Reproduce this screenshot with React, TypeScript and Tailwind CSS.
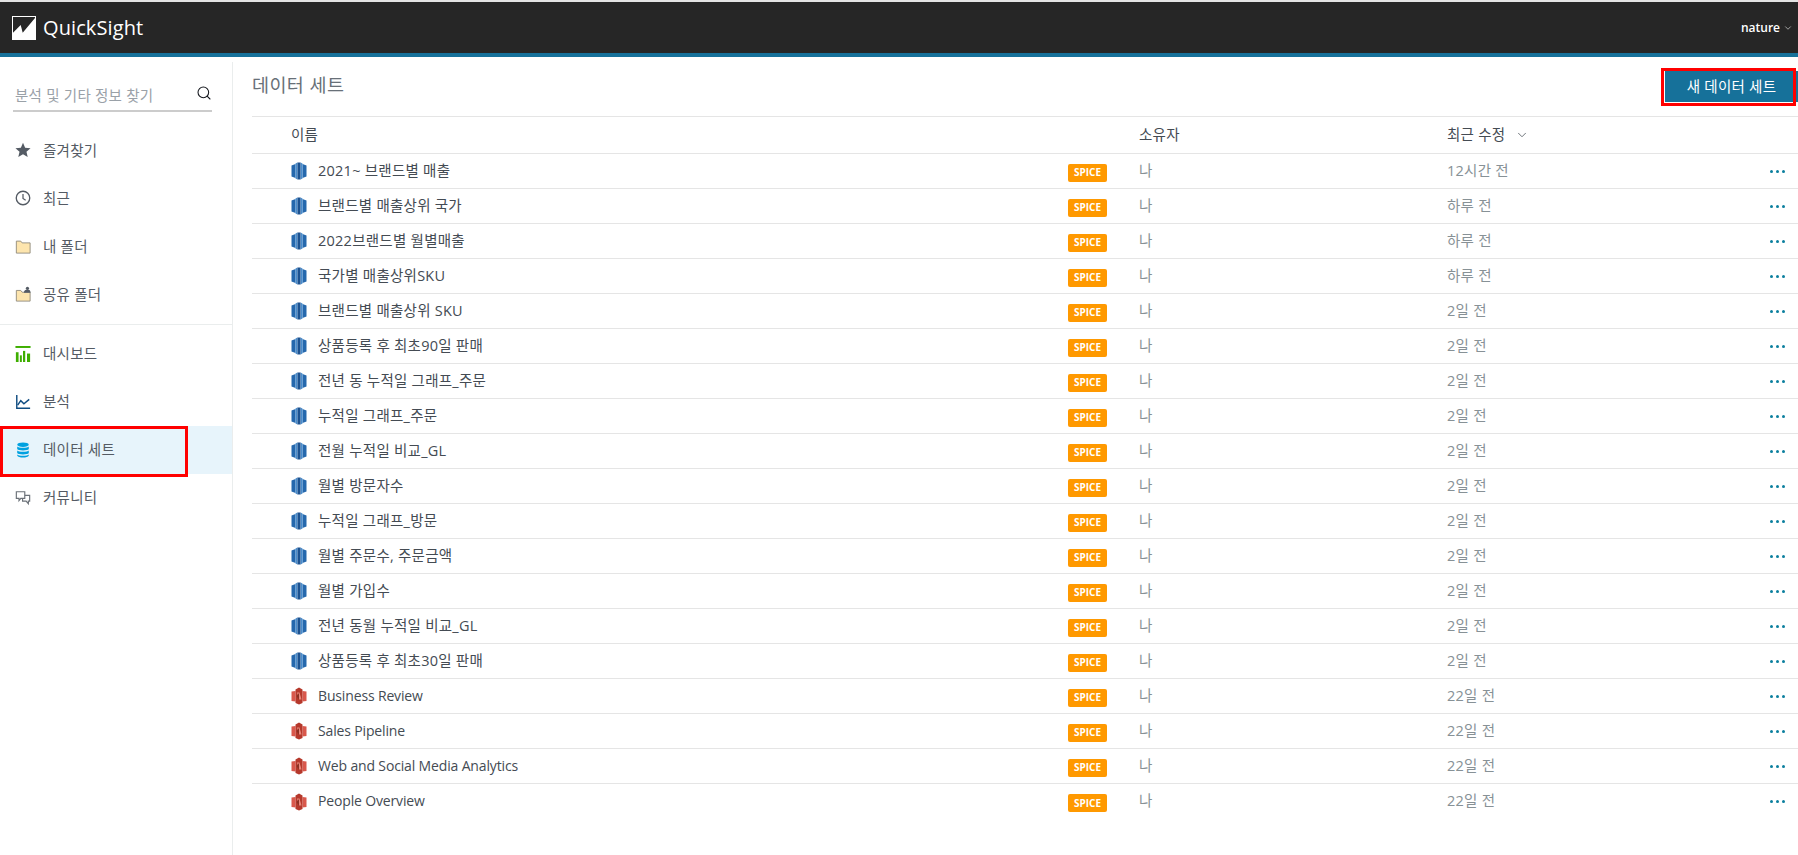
import { Search, ChevronDown } from "lucide-react";
import type { ReactNode } from "react";

const rows = [
  { name: "2021~ 브랜드별 매출", when: "12시간 전", kind: "blue" },
  { name: "브랜드별 매출상위 국가", when: "하루 전", kind: "blue" },
  { name: "2022브랜드별 월별매출", when: "하루 전", kind: "blue" },
  { name: "국가별 매출상위SKU", when: "하루 전", kind: "blue" },
  { name: "브랜드별 매출상위 SKU", when: "2일 전", kind: "blue" },
  { name: "상품등록 후 최초90일 판매", when: "2일 전", kind: "blue" },
  { name: "전년 동 누적일 그래프_주문", when: "2일 전", kind: "blue" },
  { name: "누적일 그래프_주문", when: "2일 전", kind: "blue" },
  { name: "전월 누적일 비교_GL", when: "2일 전", kind: "blue" },
  { name: "월별 방문자수", when: "2일 전", kind: "blue" },
  { name: "누적일 그래프_방문", when: "2일 전", kind: "blue" },
  { name: "월별 주문수, 주문금액", when: "2일 전", kind: "blue" },
  { name: "월별 가입수", when: "2일 전", kind: "blue" },
  { name: "전년 동월 누적일 비교_GL", when: "2일 전", kind: "blue" },
  { name: "상품등록 후 최초30일 판매", when: "2일 전", kind: "blue" },
  { name: "Business Review", when: "22일 전", kind: "red" },
  { name: "Sales Pipeline", when: "22일 전", kind: "red" },
  { name: "Web and Social Media Analytics", when: "22일 전", kind: "red" },
  { name: "People Overview", when: "22일 전", kind: "red" },
];

function Logo() {
  return (
    <svg width="24" height="24" viewBox="0 0 24 24">
      <rect width="24" height="24" fill="#fff" />
      <path d="M1 1h22v1L10.700 16.700 8.700 9 1 16.700z" fill="#262626" />
    </svg>
  );
}

function StarIcon() {
  return (
    <svg width="18" height="18" viewBox="0 0 18 18">
      <path d="M9 .8l2.400 5.700 6.100.5-4.600 4 1.400 6L9 13.800 3.700 17l1.400-6-4.600-4 6.100-.5z" fill="#545b64" />
    </svg>
  );
}

function ClockIcon() {
  return (
    <svg width="18" height="18" viewBox="0 0 18 18" fill="none" stroke="#545b64">
      <circle cx="9" cy="9" r="7.600" strokeWidth="1.500" />
      <path d="M9 4.500V9.500l3 2" strokeWidth="1.400" />
    </svg>
  );
}

function FolderIcon() {
  return (
    <svg width="18" height="18" viewBox="0 0 18 18">
      <path d="M1.500 3.500h5l1.500 2h9V17h-15.500z" fill="#fde5ae" stroke="#8f8a7a" />
    </svg>
  );
}

function SharedFolderIcon() {
  return (
    <svg width="18" height="18" viewBox="0 0 18 18">
      <path d="M1.500 5h5l1.500 2h9v10h-15.500z" fill="#fde5ae" stroke="#8f8a7a" />
      <circle cx="14" cy="2.600" r="1.800" fill="#545b64" />
      <path d="M10 7.500c0-2.500 1.800-3.500 4-3.500s3.500 1 3.500 3.500z" fill="#545b64" />
    </svg>
  );
}

function DashboardIcon() {
  return (
    <svg width="18" height="18" viewBox="0 0 18 18" fill="#3eae00">
      <rect x="0.500" y="0" width="17" height="2.200" />
      <rect x="1" y="7" width="3" height="11" />
      <rect x="5.500" y="10.500" width="2.200" height="7.500" />
      <rect x="9" y="5.500" width="2.500" height="12.500" />
      <rect x="13.500" y="8.500" width="3.500" height="9.500" />
    </svg>
  );
}

function AnalysisIcon() {
  return (
    <svg width="18" height="18" viewBox="0 0 18 18" fill="none" stroke="#0f4c81" strokeWidth="1.600">
      <path d="M2 1v15h15" />
      <path d="M3 12.500l3.500-5 3.500 3.500 6-5" />
    </svg>
  );
}

function DatabaseIcon() {
  return (
    <svg width="18" height="18" viewBox="0 0 18 18" fill="#00a1e0">
      <ellipse cx="9" cy="3" rx="6.500" ry="2.500" />
      <path d="M2.500 5c1 2 12 2 13 0v3c-1 2.200-12 2.200-13 0z" />
      <path d="M2.500 9.500c1 2 12 2 13 0v3c-1 2.200-12 2.200-13 0z" />
      <path d="M2.500 14c1 2 12 2 13 0v1.200c-1 3-12 3-13 0z" />
    </svg>
  );
}

function CommunityIcon() {
  return (
    <svg width="18" height="18" viewBox="0 0 18 18" fill="none" stroke="#6b7178" strokeWidth="1.300">
      <path d="M1.500 2h9.500v7.500H6.500l-2 2.500V9.500h-3z" />
      <path d="M11 6h5.500v6.500H15v3L12.500 12.500H8.500v-3" />
    </svg>
  );
}

function BlueSetIcon() {
  return (
    <svg width="16" height="18" viewBox="0 0 16 18">
      <path d="M.5 3.500L4.500 2v14L.5 14.500z" fill="#2568ad" />
      <path d="M15.500 3.500L11.500 2v14l4-1.500z" fill="#2568ad" />
      <path d="M4.500 1.500L6.500 .5v17l-2-1z" fill="#4a8ccb" />
      <path d="M11.500 1.500L9.500 .5v17l2-1z" fill="#4a8ccb" />
      <rect x="6.500" y="0.500" width="3" height="17" fill="#1c5290" />
    </svg>
  );
}

function RedSetIcon() {
  return (
    <svg width="16" height="18" viewBox="0 0 16 18">
      <path d="M.5 4.500l4-.5v10.500l-4-.5z" fill="#d9584c" />
      <path d="M15.500 4.500l-4-.5v10.500l4-.5z" fill="#d9584c" />
      <path d="M4.500 2.500L8 .5l3.500 2v13.500L8 17.500l-3.500-1.500z" fill="#b5382b" />
      <path d="M6 5.500h2.500l2 7H8z" fill="#e8867a" />
      <path d="M5.500 9l2.500-3v7z" fill="#8c3123" />
    </svg>
  );
}

function NavItem({ icon, label, active, lift }: { icon: ReactNode; label: string; active?: boolean; lift?: boolean }) {
  return (
    <div className={`relative flex h-12 items-center gap-3 pl-[15px] text-[14.5px] tracking-[0.25px] text-[#545b64] ${active ? "bg-[#e7f4fb]" : ""}`}>
      <span className="flex w-4 shrink-0 justify-center">{icon}</span>
      <span className={lift ? "pb-[1px]" : "pt-[2px]"}>{label}</span>
      {active && <div className="absolute left-0 top-0 h-[51px] w-[188px] border-[3px] border-[#ff0000]" />}
    </div>
  );
}

function Dots() {
  return (
    <div className="flex gap-[3px]">
      <span className="h-[3px] w-[3px] rounded-full bg-[#0b7f9e]" />
      <span className="h-[3px] w-[3px] rounded-full bg-[#0b7f9e]" />
      <span className="h-[3px] w-[3px] rounded-full bg-[#0b7f9e]" />
    </div>
  );
}

export default function App() {
  return (
    <div className="flex h-[855px] w-[1798px] flex-col overflow-hidden border-t-2 border-[#e3e3e3] bg-white font-['Open_Sans','Noto_Sans_CJK_KR',sans-serif]">
      <header className="flex h-[55px] shrink-0 items-center justify-between border-b-4 border-[#16719a] bg-[#262626] pl-3 pr-[5px] text-white">
        <div className="flex items-center gap-[7px]">
          <Logo />
          <span className="text-[20px] tracking-[0.1px]">QuickSight</span>
        </div>
        <div className="flex items-center gap-[3px] text-[12px] font-semibold">
          nature
          <ChevronDown size={10} className="text-[#b8b8b8]" />
        </div>
      </header>

      <div className="flex min-h-0 flex-1">
        <aside className="w-[233px] shrink-0 pt-[5px]">
          <div className="h-full border-r border-[#eaeded]">
            <div className="pl-[13px] pr-[20px] pt-[21px]">
              <div className="flex h-[29px] items-start justify-between border-b-2 border-[#cccccc]">
                <span className="pl-[2px] text-[14.5px] leading-[26px] tracking-[0.25px] text-[#9aa1a8]">분석 및 기타 정보 찾기</span>
                <Search size={16} strokeWidth={1.6} className="mt-[2px] text-[#16191f]" />
              </div>
            </div>
            <nav className="mt-[14px]">
              <NavItem icon={<StarIcon />} label="즐겨찾기" />
              <NavItem icon={<ClockIcon />} label="최근" />
              <NavItem icon={<FolderIcon />} label="내 폴더" />
              <NavItem icon={<SharedFolderIcon />} label="공유 폴더" />
              <div className="mb-[5px] mt-[6px] border-t border-[#eaeded]" />
              <NavItem icon={<DashboardIcon />} label="대시보드" lift />
              <NavItem icon={<AnalysisIcon />} label="분석" lift />
              <NavItem icon={<DatabaseIcon />} label="데이터 세트" active lift />
              <NavItem icon={<CommunityIcon />} label="커뮤니티" lift />
            </nav>
          </div>
        </aside>

        <main className="min-w-0 flex-1 pl-[19px]">
          <div className="flex h-[59px] items-center justify-between">
            <h1 className="pb-1 text-[18.5px] font-normal tracking-[0.4px] text-[#687078]">데이터 세트</h1>
            <div className="relative">
              <button className="flex h-[31px] w-[133px] items-center justify-center bg-[#16719a] text-[14.5px] tracking-[0.25px] text-white">
                새 데이터 세트
              </button>
              <div className="absolute -left-[4px] -top-[3px] h-[38px] w-[135px] border-[3px] border-[#ff0000]" />
            </div>
          </div>

          <div className="flex h-[38px] items-center border-y border-[#e5e5e5] pl-[39px] text-[14.5px] tracking-[0.25px] text-[#444b53]">
            <div className="w-[848px] shrink-0">이름</div>
            <div className="w-[308px] shrink-0">소유자</div>
            <div className="flex items-center gap-[10px]">
              최근 수정
              <ChevronDown size={14} strokeWidth={1.3} />
            </div>
          </div>

          {rows.map((row) => (
            <div key={row.name} className="flex h-[35px] items-center border-b border-[#e5e5e5] pl-[39px] text-[14px] last:border-b-0">
              <div className="w-[27px] shrink-0">{row.kind === "blue" ? <BlueSetIcon /> : <RedSetIcon />}</div>
              <div className={`w-[750px] shrink-0 text-[#444b53] ${row.kind === "blue" ? "pb-[1px] text-[14.5px] tracking-[0.25px]" : "pb-[2px] tracking-[-0.15px]"}`}>
                {row.name}
              </div>
              <div className="mr-8 mt-[3px] flex h-[18px] w-[39px] shrink-0 items-center justify-center rounded-[2px] bg-[#ff9900] text-[10px] font-bold text-white">
                SPICE
              </div>
              <div className="w-[308px] shrink-0 pb-[1px] text-[14.5px] text-[#879196]">나</div>
              <div className="w-[323px] shrink-0 pb-[1px] text-[14.5px] tracking-[0.25px] text-[#879196]">{row.when}</div>
              <Dots />
            </div>
          ))}
        </main>
      </div>
    </div>
  );
}
